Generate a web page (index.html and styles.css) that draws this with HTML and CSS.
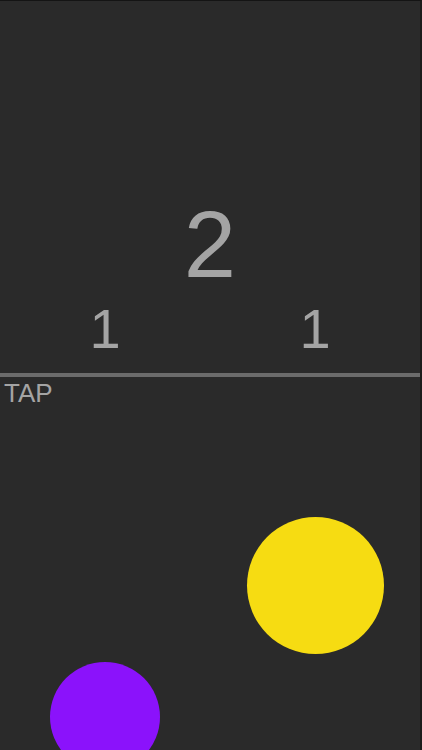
FILE: index.html
```html
<!DOCTYPE html>
<html>
<head>
<meta charset="utf-8">
<link rel="stylesheet" href="styles.css">
</head>
<body>
<div class="screen">
  <div class="scoreboard">
    <div class="total">2</div>
    <div class="players">
      <div class="player">1</div>
      <div class="player">1</div>
    </div>
  </div>
  <div class="divider"></div>
  <div class="field">
    <div class="hint">TAP</div>
    <div class="ball ball-yellow"></div>
    <div class="ball ball-purple"></div>
  </div>
</div>
</body>
</html>
```
FILE: styles.css
```css
html, body {
  margin: 0;
  padding: 0;
  background: #2a2a2a;
}
body {
  width: 422px;
  height: 750px;
  overflow: hidden;
  font-family: "Liberation Sans", Arial, sans-serif;
}
.screen {
  width: 420px;
  height: 749px;
  border-top: 1px solid #141414;
  border-right: 2px solid #1c1c1c;
  background: #2a2a2a;
  display: flex;
  flex-direction: column;
  overflow: hidden;
}
.scoreboard {
  height: 372px;
  display: flex;
  flex-direction: column;
  padding-top: 197px;
  box-sizing: border-box;
  color: #a4a4a4;
}
.total {
  font-size: 94px;
  line-height: 94px;
  text-align: center;
}
.players {
  display: flex;
  margin-top: 9px;
}
.player {
  flex: 1;
  text-align: center;
  font-size: 56px;
  line-height: 56px;
}
.divider {
  height: 4px;
  background: #6b6b6b;
  flex: none;
}
.field {
  position: relative;
  flex: 1;
}
.hint {
  color: #a4a4a4;
  font-size: 26px;
  line-height: 26px;
  padding: 3px 0 0 4px;
}
.ball {
  position: absolute;
  border-radius: 50%;
}
.ball-yellow {
  left: 247px;
  top: 140px;
  width: 137px;
  height: 137px;
  background: #f6dc12;
}
.ball-purple {
  left: 50px;
  top: 285px;
  width: 110px;
  height: 110px;
  background: #8b12fb;
}
```
